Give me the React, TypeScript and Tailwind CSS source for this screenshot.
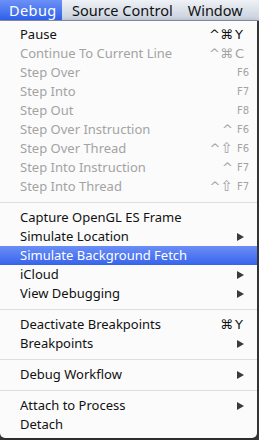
import React from "react";

type Item =
  | { kind: "item"; label: string; disabled?: boolean; mods?: string; shift?: boolean; key?: string; fkey?: string; sub?: boolean; active?: boolean }
  | { kind: "sep" };

const items: Item[] = [
  { kind: "item", label: "Pause", mods: "^⌘", key: "Y" },
  { kind: "item", label: "Continue To Current Line", disabled: true, mods: "^⌘", key: "C" },
  { kind: "item", label: "Step Over", disabled: true, fkey: "F6" },
  { kind: "item", label: "Step Into", disabled: true, fkey: "F7" },
  { kind: "item", label: "Step Out", disabled: true, fkey: "F8" },
  { kind: "item", label: "Step Over Instruction", disabled: true, mods: "^", fkey: "F6" },
  { kind: "item", label: "Step Over Thread", disabled: true, mods: "^", shift: true, fkey: "F6" },
  { kind: "item", label: "Step Into Instruction", disabled: true, mods: "^", fkey: "F7" },
  { kind: "item", label: "Step Into Thread", disabled: true, mods: "^", shift: true, fkey: "F7" },
  { kind: "sep" },
  { kind: "item", label: "Capture OpenGL ES Frame" },
  { kind: "item", label: "Simulate Location", sub: true },
  { kind: "item", label: "Simulate Background Fetch", active: true },
  { kind: "item", label: "iCloud", sub: true },
  { kind: "item", label: "View Debugging", sub: true },
  { kind: "sep" },
  { kind: "item", label: "Deactivate Breakpoints", mods: "⌘", key: "Y" },
  { kind: "item", label: "Breakpoints", sub: true },
  { kind: "sep" },
  { kind: "item", label: "Debug Workflow", sub: true },
  { kind: "sep" },
  { kind: "item", label: "Attach to Process", sub: true },
  { kind: "item", label: "Detach" },
];

function Arrow() {
  return (
    <svg width="9" height="10" viewBox="0 0 9 10" className="block">
      <path d="M1 1 L8 5 L1 9 Z" fill="#3a3a3a" />
    </svg>
  );
}

export default function App() {
  return (
    <div
      className="w-[259px] h-[440px] bg-[#3b3d40] overflow-hidden relative"
      style={{ fontFamily: '"Noto Sans", "DejaVu Sans", sans-serif' }}
    >
      {/* menu bar */}
      <div className="h-[21px] flex items-center text-[14.5px] leading-none text-[#111] bg-gradient-to-b from-[#eef1f6] to-[#c9d1de] border-b border-[#8c96a8]">
        <div className="h-full w-[62px] pl-[9px] flex items-center text-white tracking-[0.4px] bg-gradient-to-b from-[#6c90f6] to-[#2f5fe9]">
          Debug
        </div>
        <div className="pl-[10px]">Source Control</div>
        <div className="pl-[15px]">Window</div>
      </div>
      {/* menu */}
      <div className="w-[257px] h-[417px] bg-[#fbfbfb] rounded-b-[5px] pt-[4px] shadow-[0_2px_6px_rgba(0,0,0,0.4)]">
        {items.map((it, i) => {
          if (it.kind === "sep") {
            return (
              <div key={i} className="h-[12px] flex items-center">
                <div className="h-px w-full bg-[#dedede]" />
              </div>
            );
          }
          const color = it.active ? "text-white" : it.disabled ? "text-[#a3a3a3]" : "text-[#111]";
          return (
            <div
              key={i}
              className={`h-[19px] flex items-center text-[13px] leading-none ${color} ${
                it.active ? "bg-gradient-to-b from-[#6b8ef5] to-[#3763ec]" : ""
              }`}
            >
              <div className="pl-[20px] flex-1 whitespace-nowrap">{it.label}</div>
              {it.sub && (
                <div className="pr-[12px]">
                  <Arrow />
                </div>
              )}
              {(it.mods || it.key || it.fkey) && (
                <div className="flex items-center" style={{ fontFamily: '"DejaVu Sans", sans-serif' }}>
                  <span className="text-[13px]">{it.mods ?? ""}</span>
                  {it.shift && <span className="text-[15px] leading-none">⇧</span>}
                  {it.key && <span className="w-[24px] pl-[2px] text-[13px]">{it.key}</span>}
                  {it.fkey && <span className="w-[24px] pl-[4px] text-[10px]">{it.fkey}</span>}
                </div>
              )}
            </div>
          );
        })}
      </div>
    </div>
  );
}
